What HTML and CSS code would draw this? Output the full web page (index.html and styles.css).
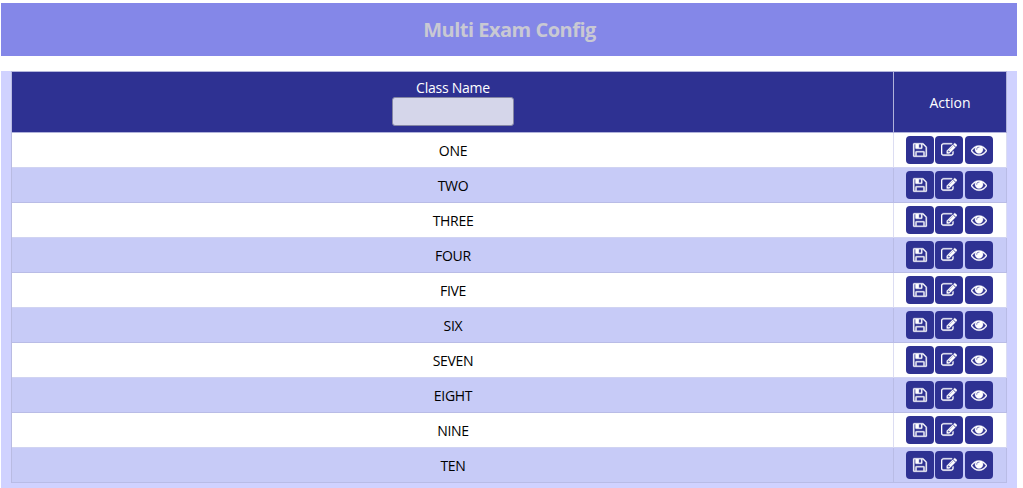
FILE: index.html
```
<!DOCTYPE html>
<html lang="en">
<head>
<meta charset="utf-8">
<title>Multi Exam Config</title>
<link rel="stylesheet" href="styles.css">
</head>
<body>
<svg class="sprite" aria-hidden="true">
  <symbol id="save" viewBox="0 0 1792 1792"><path d="M512 1536h768v-384h-768v384zm896 0h128v-896q0-14-10-38.5t-20-34.5l-281-281q-10-10-34-20t-39-10v416q0 40-28 68t-68 28h-576q-40 0-68-28t-28-68v-416h-128v1280h128v-416q0-40 28-68t68-28h832q40 0 68 28t28 68v416zm-384-928v-320q0-13-9.5-22.5t-22.5-9.5h-192q-13 0-22.5 9.5t-9.5 22.5v320q0 13 9.5 22.5t22.5 9.5h192q13 0 22.5-9.5t9.5-22.5zm640 32v928q0 40-28 68t-68 28h-1344q-40 0-68-28t-28-68v-1344q0-40 28-68t68-28h928q40 0 88 20t76 48l280 280q28 28 48 76t20 88z"/></symbol>
  <symbol id="edit" viewBox="0 0 1792 1792"><path d="M888 1184l116-116-152-152-116 116v56h96v96h56zm440-720q-16-16-33 1l-350 350q-17 17-1 33t33-1l350-350q17-17 1-33zm80 594v190q0 119-84.5 203.5t-203.5 84.5h-832q-119 0-203.5-84.5t-84.5-203.5v-832q0-119 84.5-203.5t203.5-84.5h832q63 0 117 25 15 7 18 23 3 17-9 29l-49 49q-14 14-32 8-23-6-45-6h-832q-66 0-113 47t-47 113v832q0 66 47 113t113 47h832q66 0 113-47t47-113v-126q0-13 9-22l64-64q15-15 35-7t20 29zm-96-738l288 288-672 672h-288v-288zm444 132l-92 92-288-288 92-92q28-28 68-28t68 28l152 152q28 28 28 68t-28 68z"/></symbol>
  <symbol id="view" viewBox="0 0 1792 1792"><path d="M1664 960q-152-236-381-353 61 104 61 225 0 185-131.5 316.5t-316.5 131.5-316.5-131.5-131.5-316.5q0-121 61-225-229 117-381 353 133 205 333.5 326.5t434.5 121.5 434.5-121.5 333.5-326.5zm-720-384q0-20-14-34t-34-14q-125 0-214.5 89.5t-89.5 214.5q0 20 14 34t34 14 34-14 14-34q0-86 61-147t147-61q20 0 34-14t14-34zm848 384q0 34-20 69-140 230-376.5 368.5t-499.5 138.5-499.5-139-376.5-368q-20-35-20-69t20-69q140-229 376.5-368t499.5-139 499.5 139 376.5 368q20 35 20 69z"/></symbol>
</svg>
<h1 class="title">Multi Exam Config</h1>
<main class="panel">
  <div class="grid">
    <div class="row head">
      <div class="cell name"><label for="filter">Class Name</label><input id="filter" class="filter" type="text"></div>
      <div class="cell action">Action</div>
    </div>
    <div id="rows"></div>
  </div>
</main>
<script src="script.js"></script>
</body>
</html>
```
FILE: styles.css
```
* { box-sizing: border-box; }
body {
  margin: 0;
  padding: 3px 6px 0 1px;
  height: 488px;
  overflow: hidden;
  display: flex;
  flex-direction: column;
  background: #fff;
  font: 14px/20px "Open Sans", sans-serif;
  color: #000;
}
.sprite { position: absolute; width: 0; height: 0; }
.title {
  flex: none;
  margin: 0 0 15px;
  height: 53px;
  line-height: 53px;
  text-align: center;
  font-size: 20px;
  font-weight: 700;
  letter-spacing: -0.5px;
  padding-left: 1px;
  color: #c9c9d3;
  background: #8487e8;
}
.panel {
  flex: 1;
  padding: 0 10px;
  background: #d0d2ff;
}
.grid {
  border-top: 1px solid #b4b6dc;
  border-left: 1px solid #b9bbe2;
}
.row {
  display: grid;
  grid-template-columns: 882px 113px;
  height: 35px;
  background: #fff;
}
.row:nth-child(even) { background: #c7cbf7; }
.cell {
  display: flex;
  align-items: center;
  justify-content: center;
  border-right: 1px solid #dcddf2;
  border-bottom: 1px solid #b9bce6;
}
.row:nth-child(odd) .cell { border-bottom-color: #d0d3f2; }
.row:nth-child(even) .cell { border-right-color: #b9bce6; }
.row .name { padding: 2px 0 0 1px; letter-spacing: -0.3px; }
.row.head {
  height: 61px;
  background: #2e3192;
  color: #fff;
}
.row.head .cell { border-color: #b0b2da; }
.head .name {
  flex-direction: column;
  padding-top: 1px;
  letter-spacing: -0.25px;
}
.row.head .action { padding: 2px 0 0; }
.filter {
  width: 122px;
  height: 29px;
  margin: -1px 0 1px;
  border: 1px solid #8486a4;
  border-radius: 3px;
  background: #d5d6ea;
  padding: 2px 6px;
}
.action { gap: 1px; padding-right: 2px; }
.btn {
  width: 28px;
  height: 28px;
  display: flex;
  align-items: center;
  justify-content: center;
  padding: 0;
  border: 0;
  border-radius: 4px;
  background: #2e3192;
}
.btn:last-child { margin-left: 1px; }
.icon {
  width: 16px;
  height: 16px;
  fill: #fff;
  stroke: #fff;
  stroke-width: 35px;
}
```
FILE: script.js
```
const names = ["ONE", "TWO", "THREE", "FOUR", "FIVE", "SIX", "SEVEN", "EIGHT", "NINE", "TEN"];
const button = (icon) =>
  `<button class="btn" type="button" aria-label="${icon}"><svg class="icon"><use href="#${icon}"/></svg></button>`;
document.getElementById("rows").innerHTML = names.map((name) =>
  `<div class="row"><div class="cell name">${name}</div><div class="cell action">${["save", "edit", "view"].map(button).join("")}</div></div>`
).join("");
```
